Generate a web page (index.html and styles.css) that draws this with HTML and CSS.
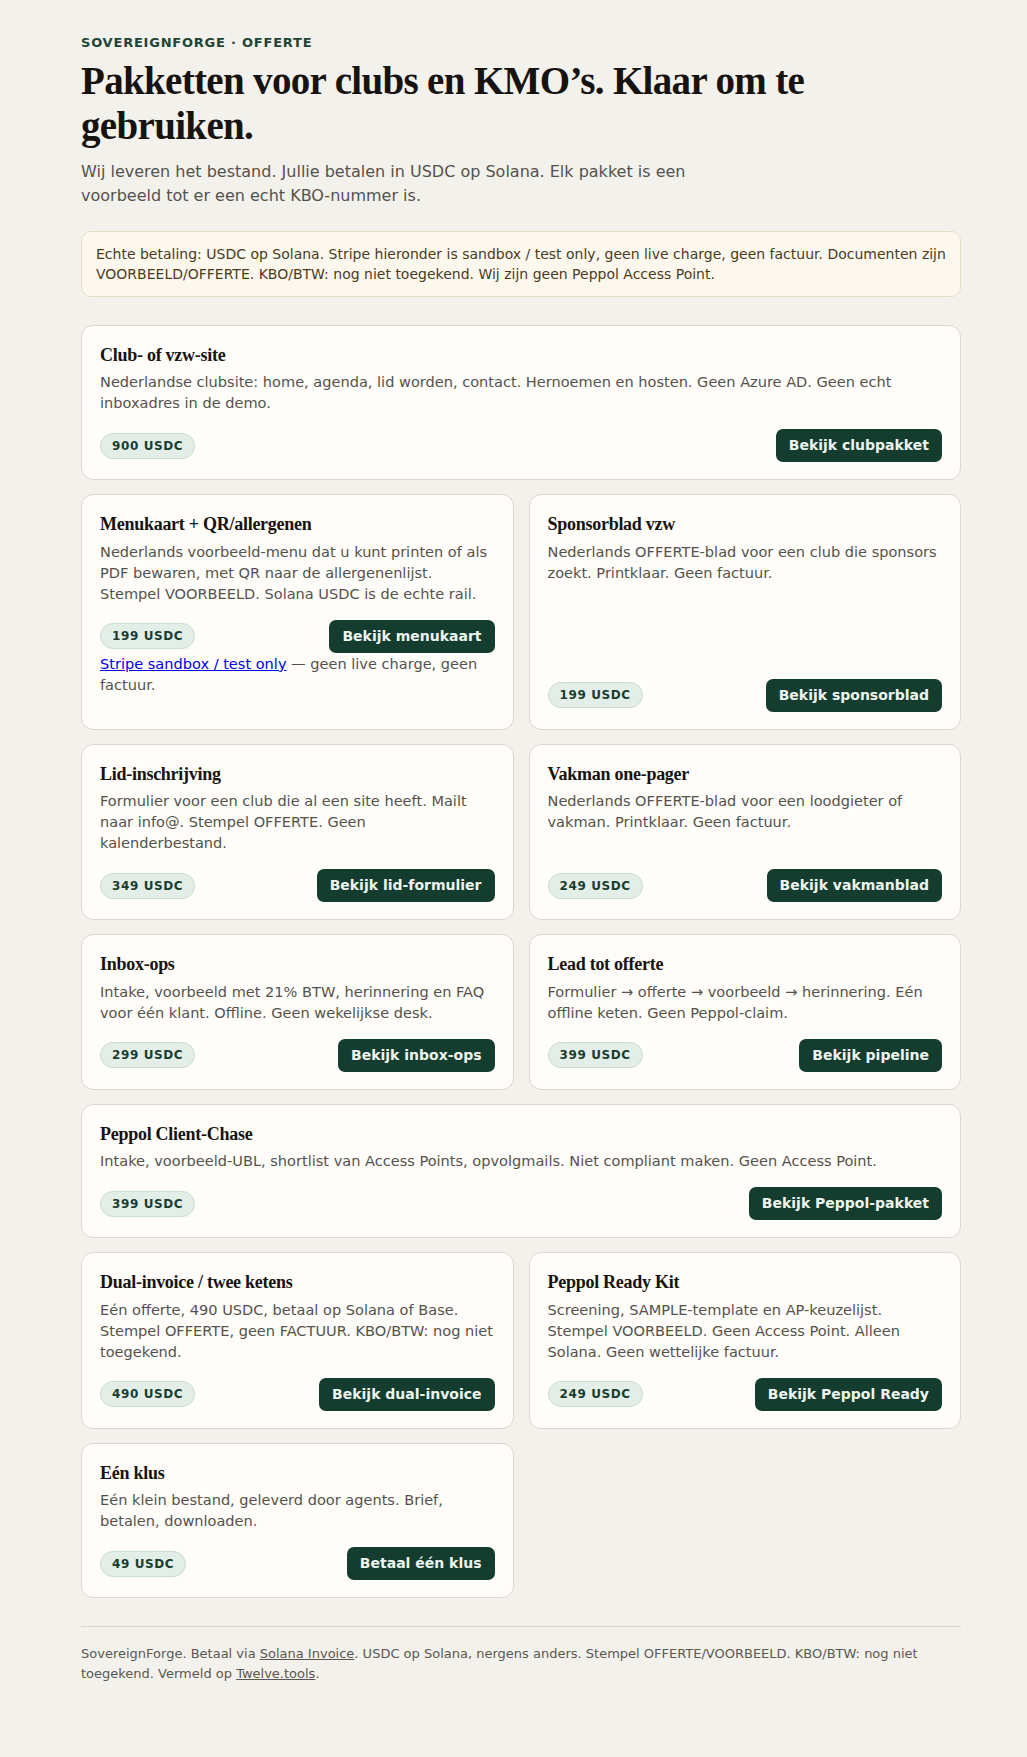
FILE: index.html
```html
<!DOCTYPE html>
<html lang="nl">
<head>
<meta charset="utf-8">
<title>SovereignForge · Offerte</title>
<link rel="stylesheet" href="styles.css">
</head>
<body>
<main class="page">
  <header class="hero">
    <p class="eyebrow">SOVEREIGNFORGE · OFFERTE</p>
    <h1 class="title">Pakketten voor clubs en KMO’s. Klaar om te gebruiken.</h1>
    <p class="lead">Wij leveren het bestand. Jullie betalen in USDC op Solana. Elk pakket is een voorbeeld tot er een echt KBO-nummer is.</p>
  </header>

  <div class="notice">Echte betaling: USDC op Solana. Stripe hieronder is sandbox / test only, geen live charge, geen factuur. Documenten zijn VOORBEELD/OFFERTE. KBO/BTW: nog niet toegekend. Wij zijn geen Peppol Access Point.</div>

  <section class="grid">
    <article class="card wide">
      <h2 class="card-title">Club- of vzw-site</h2>
      <p class="card-desc">Nederlandse clubsite: home, agenda, lid worden, contact. Hernoemen en hosten. Geen Azure AD. Geen echt inboxadres in de demo.</p>
      <div class="card-foot"><span class="price">900 USDC</span><a class="btn" href="#">Bekijk clubpakket</a></div>
    </article>

    <article class="card">
      <h2 class="card-title">Menukaart + QR/allergenen</h2>
      <p class="card-desc">Nederlands voorbeeld-menu dat u kunt printen of als PDF bewaren, met QR naar de allergenenlijst. Stempel VOORBEELD. Solana USDC is de echte rail.</p>
      <div class="card-foot"><span class="price">199 USDC</span><a class="btn" href="#">Bekijk menukaart</a></div>
      <p class="card-note"><a class="note-link" href="#">Stripe sandbox / test only</a> — geen live charge, geen factuur.</p>
    </article>

    <article class="card">
      <h2 class="card-title">Sponsorblad vzw</h2>
      <p class="card-desc">Nederlands OFFERTE-blad voor een club die sponsors zoekt. Printklaar. Geen factuur.</p>
      <div class="card-foot"><span class="price">199 USDC</span><a class="btn" href="#">Bekijk sponsorblad</a></div>
    </article>

    <article class="card">
      <h2 class="card-title">Lid-inschrijving</h2>
      <p class="card-desc">Formulier voor een club die al een site heeft. Mailt naar info@. Stempel OFFERTE. Geen kalenderbestand.</p>
      <div class="card-foot"><span class="price">349 USDC</span><a class="btn" href="#">Bekijk lid-formulier</a></div>
    </article>

    <article class="card">
      <h2 class="card-title">Vakman one-pager</h2>
      <p class="card-desc">Nederlands OFFERTE-blad voor een loodgieter of vakman. Printklaar. Geen factuur.</p>
      <div class="card-foot"><span class="price">249 USDC</span><a class="btn" href="#">Bekijk vakmanblad</a></div>
    </article>

    <article class="card">
      <h2 class="card-title">Inbox-ops</h2>
      <p class="card-desc">Intake, voorbeeld met 21% BTW, herinnering en FAQ voor één klant. Offline. Geen wekelijkse desk.</p>
      <div class="card-foot"><span class="price">299 USDC</span><a class="btn" href="#">Bekijk inbox-ops</a></div>
    </article>

    <article class="card">
      <h2 class="card-title">Lead tot offerte</h2>
      <p class="card-desc">Formulier → offerte → voorbeeld → herinnering. Eén offline keten. Geen Peppol-claim.</p>
      <div class="card-foot"><span class="price">399 USDC</span><a class="btn" href="#">Bekijk pipeline</a></div>
    </article>

    <article class="card wide">
      <h2 class="card-title">Peppol Client-Chase</h2>
      <p class="card-desc">Intake, voorbeeld-UBL, shortlist van Access Points, opvolgmails. Niet compliant maken. Geen Access Point.</p>
      <div class="card-foot"><span class="price">399 USDC</span><a class="btn" href="#">Bekijk Peppol-pakket</a></div>
    </article>

    <article class="card">
      <h2 class="card-title">Dual-invoice / twee ketens</h2>
      <p class="card-desc">Eén offerte, 490 USDC, betaal op Solana of Base. Stempel OFFERTE, geen FACTUUR. KBO/BTW: nog niet toegekend.</p>
      <div class="card-foot"><span class="price">490 USDC</span><a class="btn" href="#">Bekijk dual-invoice</a></div>
    </article>

    <article class="card">
      <h2 class="card-title">Peppol Ready Kit</h2>
      <p class="card-desc">Screening, SAMPLE-template en AP-keuzelijst. Stempel VOORBEELD. Geen Access Point. Alleen Solana. Geen wettelijke factuur.</p>
      <div class="card-foot"><span class="price">249 USDC</span><a class="btn" href="#">Bekijk Peppol Ready</a></div>
    </article>

    <article class="card">
      <h2 class="card-title">Eén klus</h2>
      <p class="card-desc">Eén klein bestand, geleverd door agents. Brief, betalen, downloaden.</p>
      <div class="card-foot"><span class="price">49 USDC</span><a class="btn" href="#">Betaal één klus</a></div>
    </article>
  </section>

  <footer class="site-foot">
    <p>SovereignForge. Betaal via <a href="#">Solana Invoice</a>. USDC op Solana, nergens anders. Stempel OFFERTE/VOORBEELD. KBO/BTW: nog niet toegekend. Vermeld op <a href="#">Twelve.tools</a>.</p>
  </footer>
</main>
</body>
</html>
```

FILE: styles.css
```css
* { box-sizing: border-box; }

html, body {
  margin: 0;
  padding: 0;
  background: #f3f1ec;
}

body {
  font-family: "DejaVu Sans", Verdana, sans-serif;
  color: #1a1714;
}

.page {
  width: 880px;
  margin: 0 0 0 81px;
  padding: 35px 0 70px;
}

.eyebrow {
  margin: 0;
  font-size: 13px;
  line-height: 15.6px;
  font-weight: 700;
  letter-spacing: 0.06em;
  color: #1d4534;
}

.title {
  margin: 7px 0 12px;
  font-family: "Liberation Serif", "Times New Roman", serif;
  font-weight: 700;
  font-size: 39px;
  line-height: 45px;
  letter-spacing: -0.017em;
  color: #171310;
}

.lead {
  margin: 0;
  max-width: 640px;
  font-size: 16px;
  line-height: 24px;
  color: #55524d;
}

.notice {
  margin-top: 23px;
  padding: 12px 14px;
  background: #fdf8ee;
  border: 1px solid #e7dcc6;
  border-radius: 10px;
  font-size: 14px;
  line-height: 20px;
  color: #4a3b1c;
}

.grid {
  margin-top: 28px;
  display: grid;
  grid-template-columns: 1fr 1fr;
  gap: 14px 15px;
}

.card {
  display: flex;
  flex-direction: column;
  background: #fefdf9;
  border: 1px solid #dcd8cf;
  border-radius: 12px;
  padding: 18px 18px 17px;
}

.card.wide { grid-column: 1 / -1; }

.card-title {
  margin: 0 0 5px;
  font-family: "Liberation Serif", "Times New Roman", serif;
  font-weight: 700;
  font-size: 18px;
  line-height: 22.5px;
  letter-spacing: -0.015em;
  color: #171310;
}

.card-desc {
  margin: 0 0 16px;
  font-size: 14.55px;
  line-height: 21px;
  color: #55524d;
}

.card-foot {
  margin-top: auto;
  display: flex;
  align-items: center;
  justify-content: space-between;
}

.price {
  display: inline-block;
  padding: 4px 11px;
  border: 1px solid #cadcd0;
  border-radius: 999px;
  background: #e4eee8;
  font-size: 12px;
  line-height: 16px;
  font-weight: 700;
  letter-spacing: 0.05em;
  color: #183d2e;
}

.btn {
  display: inline-block;
  padding: 8px 13px;
  border-radius: 7px;
  background: #143d2f;
  color: #eef4ee;
  font-size: 14px;
  line-height: 17px;
  font-weight: 700;
  text-decoration: none;
}

.card-note {
  margin: 0 0 17px;
  font-size: 14.55px;
  line-height: 21px;
  color: #55524d;
}

.note-link { color: #0000ee; }

.site-foot {
  margin-top: 28px;
  border-top: 1px solid #d9d5cd;
  padding-top: 17px;
}

.site-foot p {
  margin: 0;
  font-size: 13px;
  line-height: 20px;
  color: #5a5752;
}

.site-foot a { color: #5a5752; }
```
